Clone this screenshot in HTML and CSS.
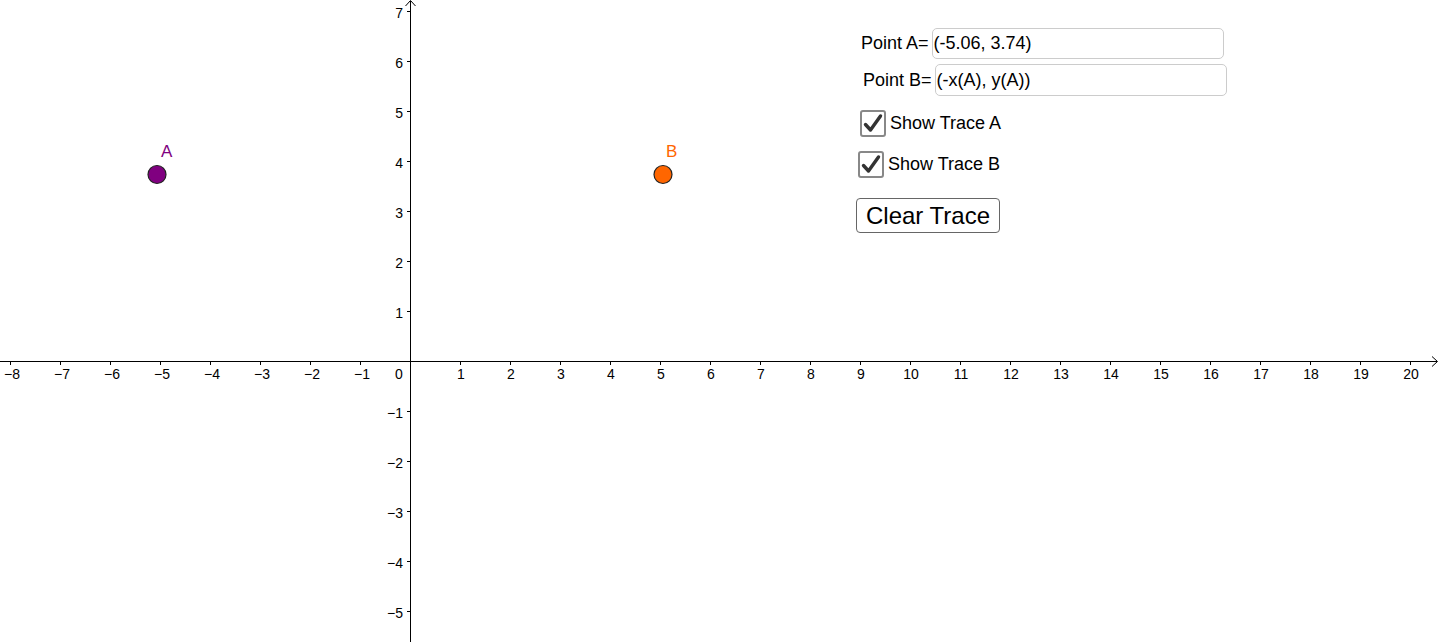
FILE: index.html
```html
<!DOCTYPE html>
<html>
<head>
<meta charset="utf-8">
<link rel="stylesheet" href="styles.css">
</head>
<body>
<div class="applet">
  <svg class="graph" width="1440" height="642" viewBox="0 0 1440 642">
    <g class="axes">
      <line x1="0" y1="361.5" x2="1437" y2="361.5"/>
      <polyline points="1432,356.5 1437.5,361.5 1432,366.5"/>
      <line x1="410.5" y1="642" x2="410.5" y2="1"/>
      <polyline points="405.5,6 410.5,0.5 415.5,6"/>
      <path d="M10.5 361v4M60.5 361v4M110.5 361v4M160.5 361v4M210.5 361v4M260.5 361v4M310.5 361v4M360.5 361v4M460.5 361v4M510.5 361v4M560.5 361v4M610.5 361v4M660.5 361v4M710.5 361v4M760.5 361v4M810.5 361v4M860.5 361v4M910.5 361v4M960.5 361v4M1010.5 361v4M1060.5 361v4M1110.5 361v4M1160.5 361v4M1210.5 361v4M1260.5 361v4M1310.5 361v4M1360.5 361v4M1410.5 361v4"/>
      <path d="M407 11.5h4M407 61.5h4M407 111.5h4M407 161.5h4M407 211.5h4M407 261.5h4M407 311.5h4M407 411.5h4M407 461.5h4M407 511.5h4M407 561.5h4M407 611.5h4"/>
    </g>
    <g class="xlabels">
      <text x="12" y="379">−8</text>
      <text x="62" y="379">−7</text>
      <text x="112" y="379">−6</text>
      <text x="162" y="379">−5</text>
      <text x="212" y="379">−4</text>
      <text x="262" y="379">−3</text>
      <text x="312" y="379">−2</text>
      <text x="362" y="379">−1</text>
      <text x="399" y="379">0</text>
      <text x="461" y="379">1</text>
      <text x="511" y="379">2</text>
      <text x="561" y="379">3</text>
      <text x="611" y="379">4</text>
      <text x="661" y="379">5</text>
      <text x="711" y="379">6</text>
      <text x="761" y="379">7</text>
      <text x="811" y="379">8</text>
      <text x="861" y="379">9</text>
      <text x="911" y="379">10</text>
      <text x="961" y="379">11</text>
      <text x="1011" y="379">12</text>
      <text x="1061" y="379">13</text>
      <text x="1111" y="379">14</text>
      <text x="1161" y="379">15</text>
      <text x="1211" y="379">16</text>
      <text x="1261" y="379">17</text>
      <text x="1311" y="379">18</text>
      <text x="1361" y="379">19</text>
      <text x="1411" y="379">20</text>
    </g>
    <g class="ylabels">
      <text x="403" y="18">7</text>
      <text x="403" y="68">6</text>
      <text x="403" y="118">5</text>
      <text x="403" y="168">4</text>
      <text x="403" y="218">3</text>
      <text x="403" y="268">2</text>
      <text x="403" y="318">1</text>
      <text x="403" y="418">−1</text>
      <text x="403" y="468">−2</text>
      <text x="403" y="518">−3</text>
      <text x="403" y="568">−4</text>
      <text x="403" y="618">−5</text>
    </g>
    <circle class="pt pt-a" cx="157" cy="174.5" r="9"/>
    <text class="lbl lbl-a" x="161" y="157">A</text>
    <circle class="pt pt-b" cx="663" cy="174.5" r="9"/>
    <text class="lbl lbl-b" x="666" y="157">B</text>
  </svg>

  <div class="panel">
    <div class="field field-a">
      <span class="flabel">Point A=</span>
      <div class="input">(-5.06, 3.74)</div>
    </div>
    <div class="field field-b">
      <span class="flabel">Point B=</span>
      <div class="input">(-x(A), y(A))</div>
    </div>
    <label class="check check-a">
      <span class="box"><svg width="22" height="22" viewBox="0 0 22 22"><path d="M3.5 11.5l5 5.5 10-14"/></svg></span>
      <span class="ctext">Show Trace A</span>
    </label>
    <label class="check check-b">
      <span class="box"><svg width="22" height="22" viewBox="0 0 22 22"><path d="M3.5 11.5l5 5.5 10-14"/></svg></span>
      <span class="ctext">Show Trace B</span>
    </label>
    <button class="btn">Clear Trace</button>
  </div>
</div>
</body>
</html>
```
FILE: styles.css
```css
html, body {
  margin: 0;
  padding: 0;
  background: #ffffff;
  font-family: "Liberation Sans", Arial, sans-serif;
  color: #000;
}
.applet {
  position: relative;
  width: 1440px;
  height: 642px;
  overflow: hidden;
}
.graph {
  position: absolute;
  left: 0;
  top: 0;
}
.axes line, .axes polyline, .axes path {
  stroke: #000;
  stroke-width: 1;
  fill: none;
}
.xlabels text, .ylabels text {
  font-family: "Liberation Sans", Arial, sans-serif;
  font-size: 14px;
  fill: #000;
}
.xlabels text { text-anchor: middle; }
.ylabels text { text-anchor: end; }
.pt { stroke: #222; stroke-width: 1.2; }
.pt-a { fill: #800080; }
.pt-b { fill: #ff6600; }
.lbl {
  font-family: "Liberation Sans", Arial, sans-serif;
  font-size: 17px;
}
.lbl-a { fill: #800080; }
.lbl-b { fill: #ff6600; }

.panel {
  position: absolute;
  left: 856px;
  top: 28px;
  display: flex;
  flex-direction: column;
  align-items: flex-start;
}
.field {
  display: flex;
  align-items: center;
  font-size: 18px;
}
.flabel { margin-right: 3px; }
.field-a { margin-left: 5px; }
.field-b { margin-left: 7px; margin-top: 5px; }
.input {
  box-sizing: border-box;
  width: 292px;
  height: 32px;
  border: 1px solid #cccccc;
  border-radius: 5px;
  padding: 0 1px;
  display: flex;
  align-items: center;
  background: #fff;
}
.field-a .input { height: 31px; }
.check {
  display: flex;
  align-items: center;
  font-size: 18px;
}
.check-a { margin-left: 4px; margin-top: 14px; }
.check-b { margin-left: 2px; margin-top: 14px; }
.box {
  box-sizing: border-box;
  width: 26px;
  height: 27px;
  border: 2px solid #888888;
  border-radius: 3px;
  display: flex;
  align-items: center;
  justify-content: center;
  margin-right: 4px;
}
.box path {
  fill: none;
  stroke: #333333;
  stroke-width: 3.4;
  stroke-linecap: round;
  stroke-linejoin: round;
}
.btn {
  box-sizing: border-box;
  margin-top: 20px;
  width: 144px;
  height: 35px;
  border: 1.5px solid #666666;
  border-radius: 4px;
  background: #ffffff;
  font-family: "Liberation Sans", Arial, sans-serif;
  font-size: 24px;
  color: #000;
  padding: 0;
  line-height: 1;
}
```
